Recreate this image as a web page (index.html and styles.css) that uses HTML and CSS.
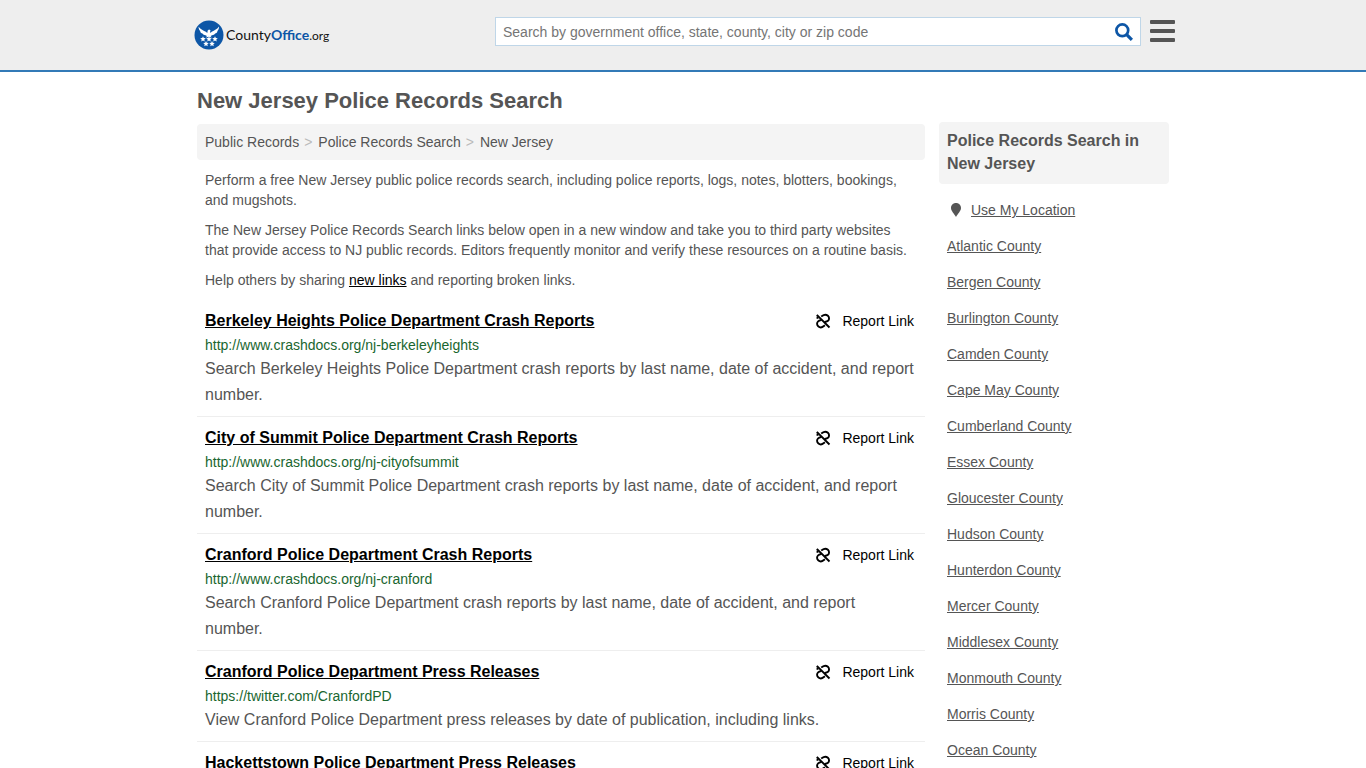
FILE: index.html
```
<!DOCTYPE html>
<html lang="en">
<head>
    <meta charset="utf-8">
    <meta name="viewport" content="width=device-width, initial-scale=1">
    <title>New Jersey Police Records Search</title>
    <link rel="stylesheet" href="styles.css">
</head>
<body>
<svg class="defs" aria-hidden="true">
    <symbol id="unlink" viewBox="0 0 16 16">
        <g fill="none" stroke="#000" stroke-width="1.900">
            <path d="M1.800 1.800l12.700 12.700"/>
            <path d="M6.200 3.600l.8-.6c1.900-1.500 4.500-1.500 5.900-.2 1.500 1.400 1.500 3.700.1 4.900-.8.700-2 1-3.400 1.400"/>
            <path d="M9.900 12.300l-1 .8c-1.800 1.500-4.300 1.500-5.700.2-1.500-1.400-1.500-3.600-.1-4.900.9-.8 2-1.100 3.400-1.500"/>
            <path d="M2.500 3.500v2.300"/>
        </g>
    </symbol>
</svg>
<header class="header">
    <div class="header-inner">
        <a class="logo" href="#" aria-label="CountyOffice.org">
            <svg class="logo-mark" viewBox="0 0 30 30">
                <circle cx="15" cy="15" r="14.500" fill="#0d56a6"/>
                <path fill="#fff" d="M4.500 6.500c1.600 2.900 4.500 3.600 7.300 5.300l1.500 1.200.4-2.400 1.300-1 1.800.6-.7.600.2 2.200 1.400-1.200c2.700-1.700 5.700-2.400 7.300-5.300.1 2.300-.7 3.600-1.600 4.400.1 1.500-1.200 2.400-2.300 2.700-.6 1.200-1.800 1.600-3 1.600l-1.500.8 1.200 1.500-3-.8-3 .8 1.200-1.500-1.500-.8c-1.200 0-2.400-.4-3-1.600-1.100-.3-2.400-1.200-2.300-2.700-.9-.8-1.700-2.100-1.600-4.400z"/>
                <g fill="#fff">
                    <path id="star" d="M9 16.200l.8 1.800 2 .2-1.500 1.300.4 2-1.700-1-1.700 1 .4-2-1.500-1.300 2-.2z"/>
                    <use href="#star" x="6"/>
                    <use href="#star" x="12"/>
                    <use href="#star" x="3" y="4.800"/>
                    <use href="#star" x="9" y="4.800"/>
                </g>
            </svg>
            <span class="logo-text">County<b>Office</b><span class="logo-org">.org</span></span>
        </a>
        <form class="search">
            <input type="text" aria-label="Search" placeholder="Search by government office, state, county, city or zip code">
            <button type="button" aria-label="Search">
                <svg viewBox="0 0 18 18"><g fill="none" stroke="#0d56a6"><circle cx="7.300" cy="7.300" r="5.900" stroke-width="2.700"/><path d="M11.700 11.700l5.200 5.200" stroke-width="3.200"/></g></svg>
            </button>
        </form>
        <button type="button" class="menu" aria-label="Menu"><span></span><span></span><span></span></button>
    </div>
</header>
<div class="wrap">
    <h1>New Jersey Police Records Search</h1>
    <div class="columns">
        <main class="main">
            <nav class="crumbs">
                <a href="#">Public Records</a><span>&gt;</span><a href="#">Police Records Search</a><span>&gt;</span><a href="#">New Jersey</a>
            </nav>
            <div class="intro">
                <p>Perform a free New Jersey public police records search, including police reports, logs, notes, blotters, bookings, and mugshots.</p>
                <p>The New Jersey Police Records Search links below open in a new window and take you to third party websites that provide access to NJ public records. Editors frequently monitor and verify these resources on a routine basis.</p>
                <p>Help others by sharing <a href="#">new links</a> and reporting broken links.</p>
            </div>
            <ul class="list">
                <li>
                    <div class="top">
                        <a class="title" href="#">Berkeley Heights Police Department Crash Reports</a>
                        <a class="report" href="#"><svg><use href="#unlink"/></svg>Report Link</a>
                    </div>
                    <div class="url">http://www.crashdocs.org/nj-berkeleyheights</div>
                    <p>Search Berkeley Heights Police Department crash reports by last name, date of accident, and report number.</p>
                </li>
                <li>
                    <div class="top">
                        <a class="title" href="#">City of Summit Police Department Crash Reports</a>
                        <a class="report" href="#"><svg><use href="#unlink"/></svg>Report Link</a>
                    </div>
                    <div class="url">http://www.crashdocs.org/nj-cityofsummit</div>
                    <p>Search City of Summit Police Department crash reports by last name, date of accident, and report number.</p>
                </li>
                <li>
                    <div class="top">
                        <a class="title" href="#">Cranford Police Department Crash Reports</a>
                        <a class="report" href="#"><svg><use href="#unlink"/></svg>Report Link</a>
                    </div>
                    <div class="url">http://www.crashdocs.org/nj-cranford</div>
                    <p>Search Cranford Police Department crash reports by last name, date of accident, and report number.</p>
                </li>
                <li>
                    <div class="top">
                        <a class="title" href="#">Cranford Police Department Press Releases</a>
                        <a class="report" href="#"><svg><use href="#unlink"/></svg>Report Link</a>
                    </div>
                    <div class="url">https://twitter.com/CranfordPD</div>
                    <p>View Cranford Police Department press releases by date of publication, including links.</p>
                </li>
                <li>
                    <div class="top">
                        <a class="title" href="#">Hackettstown Police Department Press Releases</a>
                        <a class="report" href="#"><svg><use href="#unlink"/></svg>Report Link</a>
                    </div>
                </li>
            </ul>
        </main>
        <aside class="side">
            <h2>Police Records Search in New Jersey</h2>
            <ul>
                <li class="location"><svg viewBox="0 0 10 14"><path fill="#555" d="M5 0C2 0 0 2.200 0 4.900 0 8 3.300 10.500 5 14c1.700-3.500 5-6 5-9.100C10 2.200 8 0 5 0z"/></svg><a href="#">Use My Location</a></li>
                <li><a href="#">Atlantic County</a></li>
                <li><a href="#">Bergen County</a></li>
                <li><a href="#">Burlington County</a></li>
                <li><a href="#">Camden County</a></li>
                <li><a href="#">Cape May County</a></li>
                <li><a href="#">Cumberland County</a></li>
                <li><a href="#">Essex County</a></li>
                <li><a href="#">Gloucester County</a></li>
                <li><a href="#">Hudson County</a></li>
                <li><a href="#">Hunterdon County</a></li>
                <li><a href="#">Mercer County</a></li>
                <li><a href="#">Middlesex County</a></li>
                <li><a href="#">Monmouth County</a></li>
                <li><a href="#">Morris County</a></li>
                <li><a href="#">Ocean County</a></li>
            </ul>
        </aside>
    </div>
</div>
</body>
</html>
```
FILE: styles.css
```
* {
    box-sizing: border-box;
}
body {
    margin: 0;
    color: #555;
    background: #fff;
    font: 14px/20px "Liberation Sans", Arial, sans-serif;
}
h1, h2, p, ul {
    margin: 0;
    padding: 0;
}
ul {
    list-style: none;
}
button {
    padding: 0;
    border: 0;
    background: none;
    cursor: pointer;
}
.defs {
    display: none;
}
.header {
    background: #eee;
    border-bottom: 2px solid #337ab7;
}
.header-inner {
    display: flex;
    align-items: flex-start;
    max-width: 984px;
    margin: 0 auto;
    padding: 17px 0 20px;
}
.logo {
    display: flex;
    align-items: center;
    gap: 2px;
    width: 304px;
    padding: 3px 0 0 3px;
    color: #111;
    text-decoration: none;
}
.logo-mark {
    width: 30px;
    height: 30px;
}
.logo-text {
    font: 14px/20px Lato, sans-serif;
}
.logo-text b {
    color: #0d56a6;
}
.logo-org {
    font-size: 12px;
}
.search {
    display: flex;
    flex: 1;
    height: 29px;
    background: #fff;
    border: 1px solid #bfd6e8;
}
.search input {
    flex: 1;
    min-width: 0;
    padding: 0 7px;
    border: 0;
    background: none;
    font: inherit;
}
.search input::placeholder {
    color: #757575;
}
.search button {
    width: 32px;
}
.search svg {
    display: block;
    width: 18px;
    height: 18px;
    margin: 0 auto;
}
.menu {
    display: flex;
    flex-direction: column;
    gap: 5px;
    width: 25px;
    margin: 3px 0 0 9px;
}
.menu span {
    width: 100%;
    height: 4px;
    border-radius: 1px;
    background: #555;
}
.wrap {
    max-width: 972px;
    margin: 0 auto;
}
h1 {
    padding: 15px 0 7px;
    font-size: 22px;
    line-height: 28px;
}
.columns {
    display: flex;
    align-items: flex-start;
    gap: 14px;
}
.main {
    flex: 1;
    min-width: 0;
    padding-top: 2px;
}
.crumbs {
    padding: 8px;
    border-radius: 4px;
    background: #f4f4f4;
}
.crumbs a {
    color: #555;
    text-decoration: none;
}
.crumbs span {
    padding: 0 6px 0 5px;
    color: #bbb;
}
.intro {
    padding: 10px 8px;
}
.intro p + p {
    margin-top: 10px;
}
.intro a {
    color: #000;
}
.list li {
    padding: 8px;
    border-bottom: 1px solid #eee;
}
.top {
    display: flex;
    justify-content: space-between;
    line-height: 26px;
}
.title {
    color: #000;
    font-size: 16px;
    font-weight: bold;
}
.report {
    display: flex;
    align-items: center;
    gap: 11px;
    padding-right: 3px;
    color: #000;
    text-decoration: none;
}
.report svg {
    width: 16px;
    height: 16px;
}
.url {
    color: #19662f;
    line-height: 22px;
}
.list p {
    font-size: 16px;
    line-height: 26px;
}
.side {
    width: 230px;
}
.side h2 {
    margin-bottom: 8px;
    padding: 7px 8px 9px;
    border-radius: 4px;
    background: #f4f4f4;
    font-size: 16px;
    line-height: 23px;
}
.side li {
    padding: 8px;
}
.side a {
    color: #555;
}
.location {
    display: flex;
    align-items: center;
    gap: 10px;
}
.location svg {
    width: 10px;
    height: 14px;
    margin-left: 4px;
}
```
